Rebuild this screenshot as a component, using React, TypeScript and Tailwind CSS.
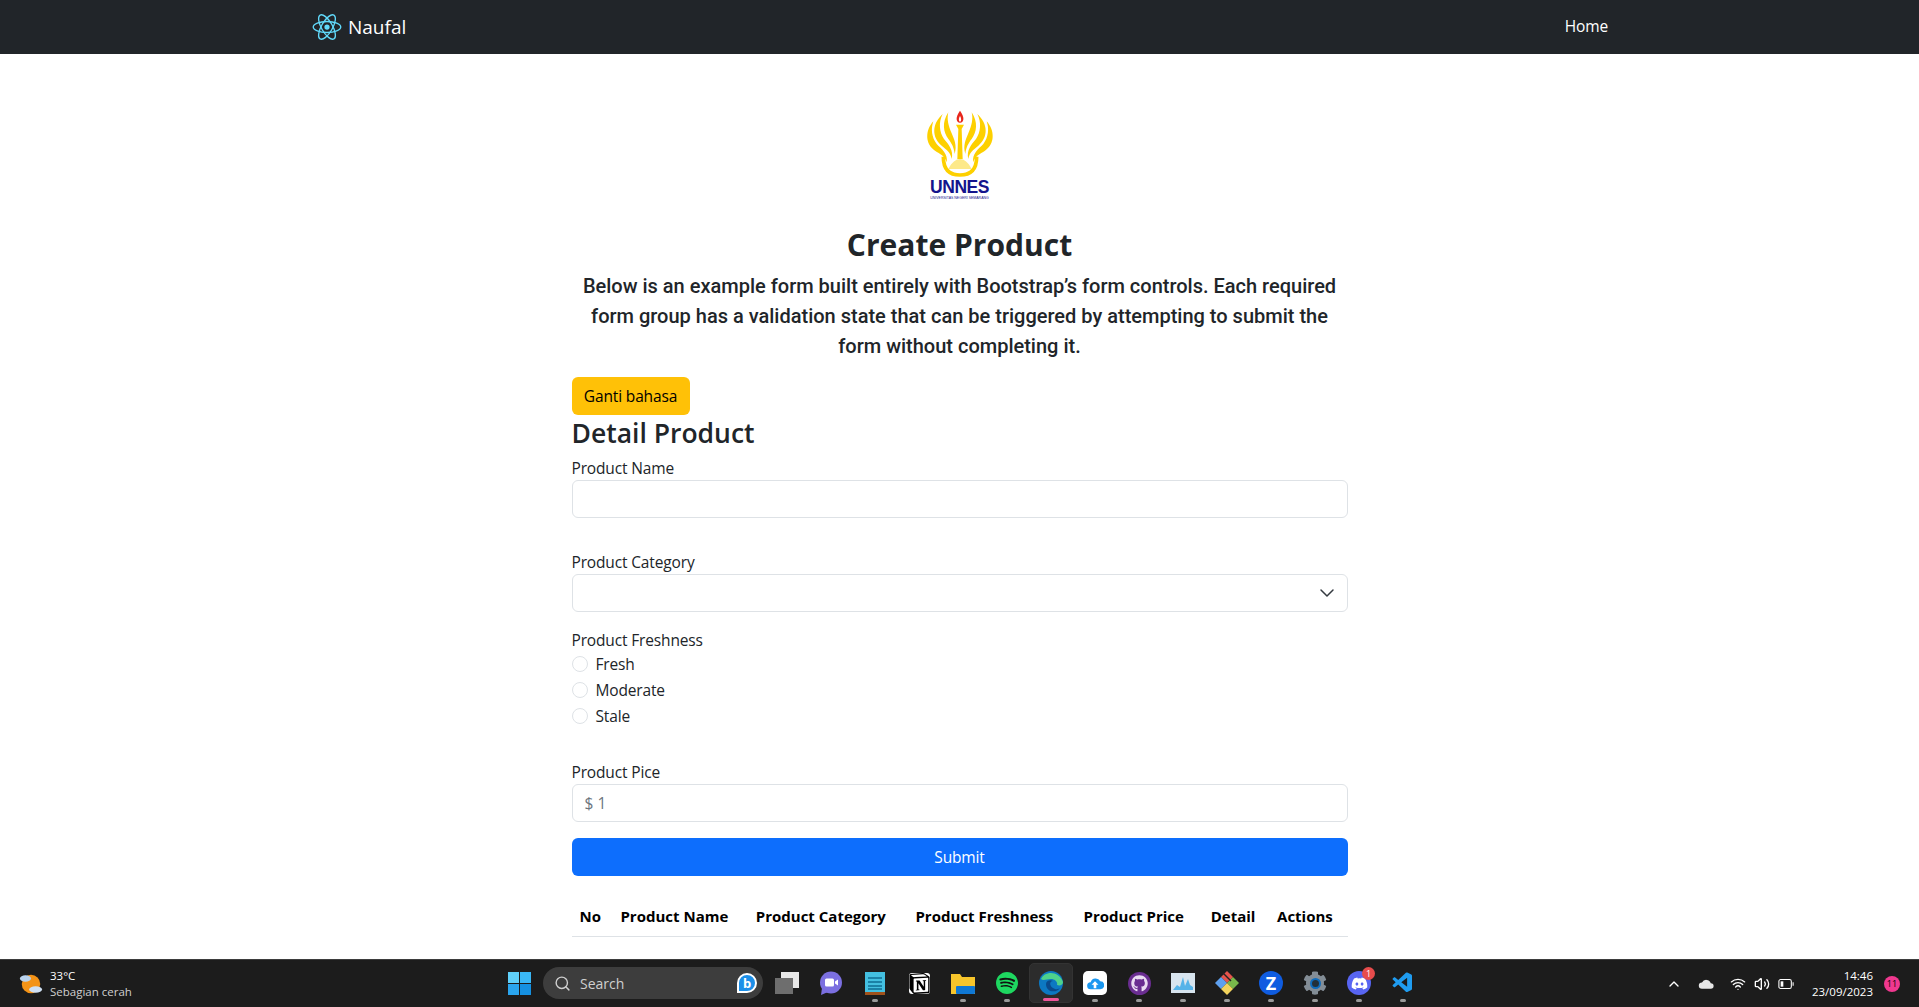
import { ChevronDown, ChevronUp, Search, Volume2, Wifi } from "lucide-react";
import { FaCog, FaDiscord, FaGithub, FaSpotify } from "react-icons/fa";
import { SiNotion } from "react-icons/si";
import { VscVscode } from "react-icons/vsc";

const font = "font-['Open_Sans','Liberation_Sans',sans-serif]";

function ReactLogo() {
  return (
    <svg viewBox="-12 -12 24 24" className="h-[30px] w-[30px]" fill="none" stroke="#61dafb" strokeWidth="1.1">
      <circle r="2.1" fill="#61dafb" stroke="none" />
      <ellipse rx="11" ry="4.4" />
      <ellipse rx="11" ry="4.4" transform="rotate(60)" />
      <ellipse rx="11" ry="4.4" transform="rotate(120)" />
    </svg>
  );
}

function Wing() {
  return (
    <g fill="#fdd000">
      <path d="M160 82C135 110 135 150 165 170C180 180 195 185 200 205C205 180 185 165 170 150C155 130 152 105 160 82Z" />
      <path d="M188 60C155 90 155 130 185 155C200 168 212 175 215 195C222 170 205 150 192 135C178 115 175 85 188 60Z" />
      <path d="M205 55C185 85 190 115 205 135C215 148 222 160 224 180C232 155 222 135 215 118C205 95 200 75 205 55Z" />
    </g>
  );
}

function UnnesLogo() {
  return (
    <div className="flex h-[92px] w-[70px] flex-col items-center">
      <svg viewBox="135 45 210 210" className="h-[70px] w-[70px] shrink-0">
        <Wing />
        <g transform="translate(480 0) scale(-1 1)">
          <Wing />
        </g>
        <path d="M228 92H252L245 105L248 195H232L235 105Z" fill="#fdd000" />
        <path d="M190 188C190 238 220 243 240 243C260 243 290 238 290 188" fill="none" stroke="#fdd000" strokeWidth="11" />
        <path d="M205 225C215 205 228 195 240 195C252 195 265 205 275 225Z" fill="#fde98a" />
        <path d="M240 50C225 70 228 85 240 86C252 85 255 70 240 50Z" fill="#e8261c" />
        <path d="M240 66C235 74 236 82 240 83C244 82 245 74 240 66Z" fill="#fff" />
      </svg>
      <span className="text-[17.5px] leading-[16px] font-bold tracking-[-0.5px] text-[#14148c] font-['Liberation_Sans',sans-serif]">UNNES</span>
      <span className="mt-[1px] text-[3.500px] leading-[4px] whitespace-nowrap text-[#14148c] font-['Liberation_Sans',sans-serif]">UNIVERSITAS NEGERI SEMARANG</span>
    </div>
  );
}

function Field({ label, children }: { label: string; children: React.ReactNode }) {
  return (
    <div>
      <label className="block h-[24px] text-[15.5px] leading-[24px] tracking-[-0.15px] text-[#212529]">{label}</label>
      {children}
    </div>
  );
}

function Radio({ label }: { label: string }) {
  return (
    <div className="flex h-[26px] items-center gap-[8px]">
      <span className="h-[16px] w-[16px] rounded-full border border-[#dee2e6] bg-white" />
      <span className="pt-[1px] text-[15.5px] tracking-[-0.15px] text-[#212529]">{label}</span>
    </div>
  );
}

function TaskIcon({ children, dot = true, active = false }: { children: React.ReactNode; dot?: boolean; active?: boolean }) {
  return (
    <div className={`relative flex h-[40px] w-[44px] items-center justify-center rounded-[5px] ${active ? "border border-[#333] bg-[#2c2c2c]" : ""}`}>
      {children}
      {active && <span className="absolute bottom-[1px] h-[3px] w-[16px] rounded-full bg-[#f0569b]" />}
      {!active && dot && <span className="absolute bottom-[1px] h-[3px] w-[6px] rounded-full bg-[#9a9a9a]" />}
    </div>
  );
}

export default function App() {
  return (
    <div className={`flex h-[1007px] w-full flex-col overflow-hidden bg-white ${font}`}>
      <nav className="flex h-[54px] shrink-0 items-center justify-between bg-[#212529] pr-[311px] pl-[312px]">
        <div className="flex items-center gap-[6px]">
          <ReactLogo />
          <span className="text-[19px] text-white">Naufal</span>
        </div>
        <span className="text-[15.5px] tracking-[-0.15px] text-white">Home</span>
      </nav>

      <main className="flex min-h-0 flex-1 flex-col items-center overflow-hidden">
        <div className="mt-[55px]">
          <UnnesLogo />
        </div>
        <h1 className="mt-[25px] text-[30px] leading-[38px] font-bold text-[#212529]">Create Product</h1>
        <p className="mt-[7px] w-[776px] text-center text-[20px] leading-[30px] font-medium text-[#212529] font-['Roboto',sans-serif]">
          Below is an example form built entirely with Bootstrap’s form controls. Each required form group has a validation state that can be triggered by attempting to submit the form without completing it.
        </p>
        <div className="mt-[16px] w-[776px]">
          <button className="h-[38px] w-[118px] rounded-[6px] bg-[#ffc107] pt-[1px] text-[15.5px] tracking-[-0.15px] text-black">Ganti bahasa</button>
          <h2 className="text-[26.5px] leading-[36px] font-semibold text-[#212529]">Detail Product</h2>
          <div className="mt-[5px]">
            <Field label="Product Name">
              <div className="h-[38px] rounded-[6px] border border-[#dee2e6]" />
            </Field>
          </div>
          <div className="mt-[32px]">
            <Field label="Product Category">
              <div className="flex h-[38px] items-center justify-end rounded-[6px] border border-[#dee2e6] pr-[8px]">
                <ChevronDown size={24} strokeWidth={1.5} className="text-[#343a40]" />
              </div>
            </Field>
          </div>
          <div className="mt-[16px]">
            <Field label="Product Freshness">
              <div className="-mt-[1px]">
                <Radio label="Fresh" />
                <Radio label="Moderate" />
                <Radio label="Stale" />
              </div>
            </Field>
          </div>
          <div className="mt-[31px]">
            <Field label="Product Pice">
              <div className="flex h-[38px] items-center rounded-[6px] border border-[#dee2e6] px-[12px] pt-[1px] text-[15.5px] text-[#6c757d]">$ 1</div>
            </Field>
          </div>
          <button className="mt-[16px] h-[38px] w-full rounded-[6px] bg-[#0d6efd] pt-[1px] text-[15.5px] tracking-[-0.15px] text-white">Submit</button>
          <table className="mt-[16px] w-full border-b border-[#dee2e6] text-[15px] text-black">
            <thead>
              <tr className="h-[44px]">
                {["No", "Product Name", "Product Category", "Product Freshness", "Product Price", "Detail", "Actions"].map((h) => (
                  <th key={h} className="px-[8px] pt-[5px] text-left font-bold">{h}</th>
                ))}
              </tr>
            </thead>
          </table>
        </div>
      </main>

      <footer className="relative flex h-[48px] shrink-0 items-center justify-between border-t border-[#3d3d3d] bg-[#1c1c1c] pr-[19px] pl-[19px] text-white">
        <div className="flex items-center gap-[7px]">
          <svg viewBox="0 0 26 24" className="h-[24px] w-[24px]">
            <circle cx="13" cy="12" r="10" fill="#f39317" />
            <ellipse cx="7" cy="6" rx="6" ry="3.500" fill="#b9d3ee" />
            <ellipse cx="18" cy="18" rx="7" ry="3.500" fill="#cfe0f3" />
          </svg>
          <div className="text-[11.5px] leading-[16px]">
            <div>33°C</div>
            <div className="text-[#cfcfcf]">Sebagian cerah</div>
          </div>
        </div>

        <div className="absolute top-[3px] left-[497px] flex h-[40px] items-center">
          <div className="flex w-[44px] justify-center">
            <svg viewBox="0 0 24 24" className="h-[23px] w-[23px]">
              <path d="M0 0h11.500v11.500H0z" fill="#5fd0fa" />
              <path d="M12.500 0H24v11.500H12.500z" fill="#3ab7f5" />
              <path d="M0 12.500h11.500V24H0z" fill="#2aa5ee" />
              <path d="M12.500 12.500H24V24H12.500z" fill="#1590e0" />
            </svg>
          </div>
          <div className="mr-[2px] ml-[2px] flex h-[32px] w-[220px] items-center rounded-full bg-[#3d3d3d] pr-[6px] pl-[11px] text-[14px] text-[#cfcfcf]">
            <Search size={17} className="mr-[9px]" />
            <span>Search</span>
            <span className="ml-auto flex h-[20px] w-[20px] items-center justify-center rounded-full rounded-bl-[3px] border-2 border-white bg-[#1c8fe8] text-[13px] leading-none font-bold text-white">b</span>
          </div>
          <TaskIcon dot={false}>
            <svg viewBox="0 0 24 22" className="h-[22px] w-[24px]">
              <rect x="6" y="0" width="18" height="16" fill="#e8e8e8" />
              <rect x="0" y="6" width="18" height="16" fill="#6e6e6e" />
            </svg>
          </TaskIcon>
          <TaskIcon dot={false}>
            <svg viewBox="0 0 24 24" className="h-[24px] w-[24px]">
              <circle cx="12" cy="11.500" r="11" fill="#7b6fe0" />
              <path d="M3 17l-1 7 7-3z" fill="#7b6fe0" />
              <rect x="6" y="7.500" width="9" height="8" rx="1.500" fill="#fff" />
              <path d="M16 10.500l3-2v6l-3-2z" fill="#fff" />
            </svg>
          </TaskIcon>
          <TaskIcon>
            <svg viewBox="0 0 20 24" className="h-[24px] w-[20px]">
              <rect y="1" width="20" height="21" fill="#43bfe0" />
              <rect y="21" width="20" height="3" fill="#a0521c" />
              <path d="M3 7h14M3 11h14M3 15h14M3 18h14" stroke="#0f6d92" strokeWidth="1.500" />
            </svg>
          </TaskIcon>
          <TaskIcon dot={false}>
            <div className="flex h-[21px] w-[21px] items-center justify-center rounded-[3px] bg-white">
              <SiNotion size={21} className="text-black" />
            </div>
          </TaskIcon>
          <TaskIcon>
            <svg viewBox="0 0 24 22" className="h-[22px] w-[24px]">
              <path d="M0 2h9l2 3h13v17H0z" fill="#f7c52b" />
              <rect x="5" y="14" width="19" height="8" rx="1" fill="#0f78d4" />
            </svg>
          </TaskIcon>
          <TaskIcon>
            <div className="flex h-[22px] w-[22px] items-center justify-center rounded-full bg-[#111]">
              <FaSpotify size={24} className="text-[#1ed760]" />
            </div>
          </TaskIcon>
          <TaskIcon active>
            <svg viewBox="0 0 24 24" className="h-[24px] w-[24px]">
              <circle cx="12" cy="12" r="12" fill="#0c78c2" />
              <path d="M2 8c3-8 18-9 22 3 0 3-3 4-6 3 1-3-2-6-6-6-4 0-8 2-10 0z" fill="#4ed18b" />
              <path d="M7 13c0-3 4-5 7-3-4 0-4 6 2 8 2 .5 4 0 5-1-3 5-14 5-14-4z" fill="#0a4a8c" />
            </svg>
          </TaskIcon>
          <TaskIcon>
            <div className="flex h-[24px] w-[24px] items-center justify-center rounded-[5px] bg-white">
              <svg viewBox="0 0 20 16" className="h-[14px] w-[18px]">
                <path d="M5 15a4 4 0 010-8 6 6 0 0111-1 4.500 4.500 0 010 9z" fill="#1a97f0" />
                <path d="M10 6l-4 4h2.500v4h3v-4H14z" fill="#fff" />
              </svg>
            </div>
          </TaskIcon>
          <TaskIcon>
            <div className="flex h-[23px] w-[23px] items-center justify-center rounded-full bg-[#6a2d91]">
              <FaGithub size={17} className="text-[#eadcf2]" />
            </div>
          </TaskIcon>
          <TaskIcon>
            <svg viewBox="0 0 24 20" className="h-[20px] w-[24px]">
              <rect width="24" height="20" fill="#d7e4ee" />
              <path d="M2 17l4-5 3 2 3-10 2 9 3-7 2 6 3 2v3H2z" fill="#55b3e8" />
            </svg>
          </TaskIcon>
          <TaskIcon>
            <svg viewBox="0 0 24 24" className="h-[24px] w-[24px]">
              <path d="M12 0l6 6-6 6-6-6z" fill="#e5534b" />
              <path d="M18 6l6 6-6 6-6-6z" fill="#78b84a" />
              <path d="M6 6l6 6-6 6-6-6z" fill="#5ea0ef" />
              <path d="M12 12l6 6-6 6-6-6z" fill="#f3d35c" />
              <path d="M8 2l8 8" stroke="#222" strokeWidth="1.500" />
            </svg>
          </TaskIcon>
          <TaskIcon>
            <div className="flex h-[24px] w-[24px] items-center justify-center rounded-full bg-[#0f5ce0] text-[18px] font-bold text-white">Z</div>
          </TaskIcon>
          <TaskIcon>
            <div className="relative flex h-[24px] w-[24px] items-center justify-center">
              <FaCog size={24} className="text-[#838d96]" />
              <span className="absolute h-[11px] w-[11px] rounded-full border-[2px] border-[#0f6cbd] bg-[#22303a]" />
            </div>
          </TaskIcon>
          <TaskIcon>
            <div className="relative flex h-[24px] w-[24px] items-center justify-center rounded-full bg-[#5865f2]">
              <FaDiscord size={17} className="text-white" />
              <span className="absolute -top-[4px] -right-[4px] flex h-[13px] w-[13px] items-center justify-center rounded-full bg-[#e74c4c] text-[9px] text-white">1</span>
            </div>
          </TaskIcon>
          <TaskIcon>
            <VscVscode size={24} className="text-[#1f9cf0]" />
          </TaskIcon>
        </div>

        <div className="flex items-center">
          <ChevronUp size={16} className="mr-[16px]" />
          <svg viewBox="0 0 20 12" className="mr-[16px] h-[12px] w-[16px]">
            <path d="M5 12a4 4 0 010-8 6 6 0 0111 1 3.500 3.500 0 010 7z" fill="#e6e6e6" />
          </svg>
          <Wifi size={16} className="mr-[8px]" />
          <Volume2 size={16} className="mr-[8px]" />
          <svg viewBox="0 0 18 12" className="mr-[18px] h-[12px] w-[16px]" fill="none" stroke="#fff" strokeWidth="1.200">
            <rect x="1" y="1" width="14" height="10" rx="2" />
            <rect x="3" y="3" width="3" height="6" fill="#fff" stroke="none" />
            <path d="M17 4v4" />
          </svg>
          <div className="mr-[11px] text-right text-[11.5px] leading-[16px]">
            <div>14:46</div>
            <div>23/09/2023</div>
          </div>
          <span className="flex h-[16px] w-[16px] items-center justify-center rounded-full bg-[#f0388f] text-[9px] text-black">11</span>
        </div>
      </footer>
    </div>
  );
}
